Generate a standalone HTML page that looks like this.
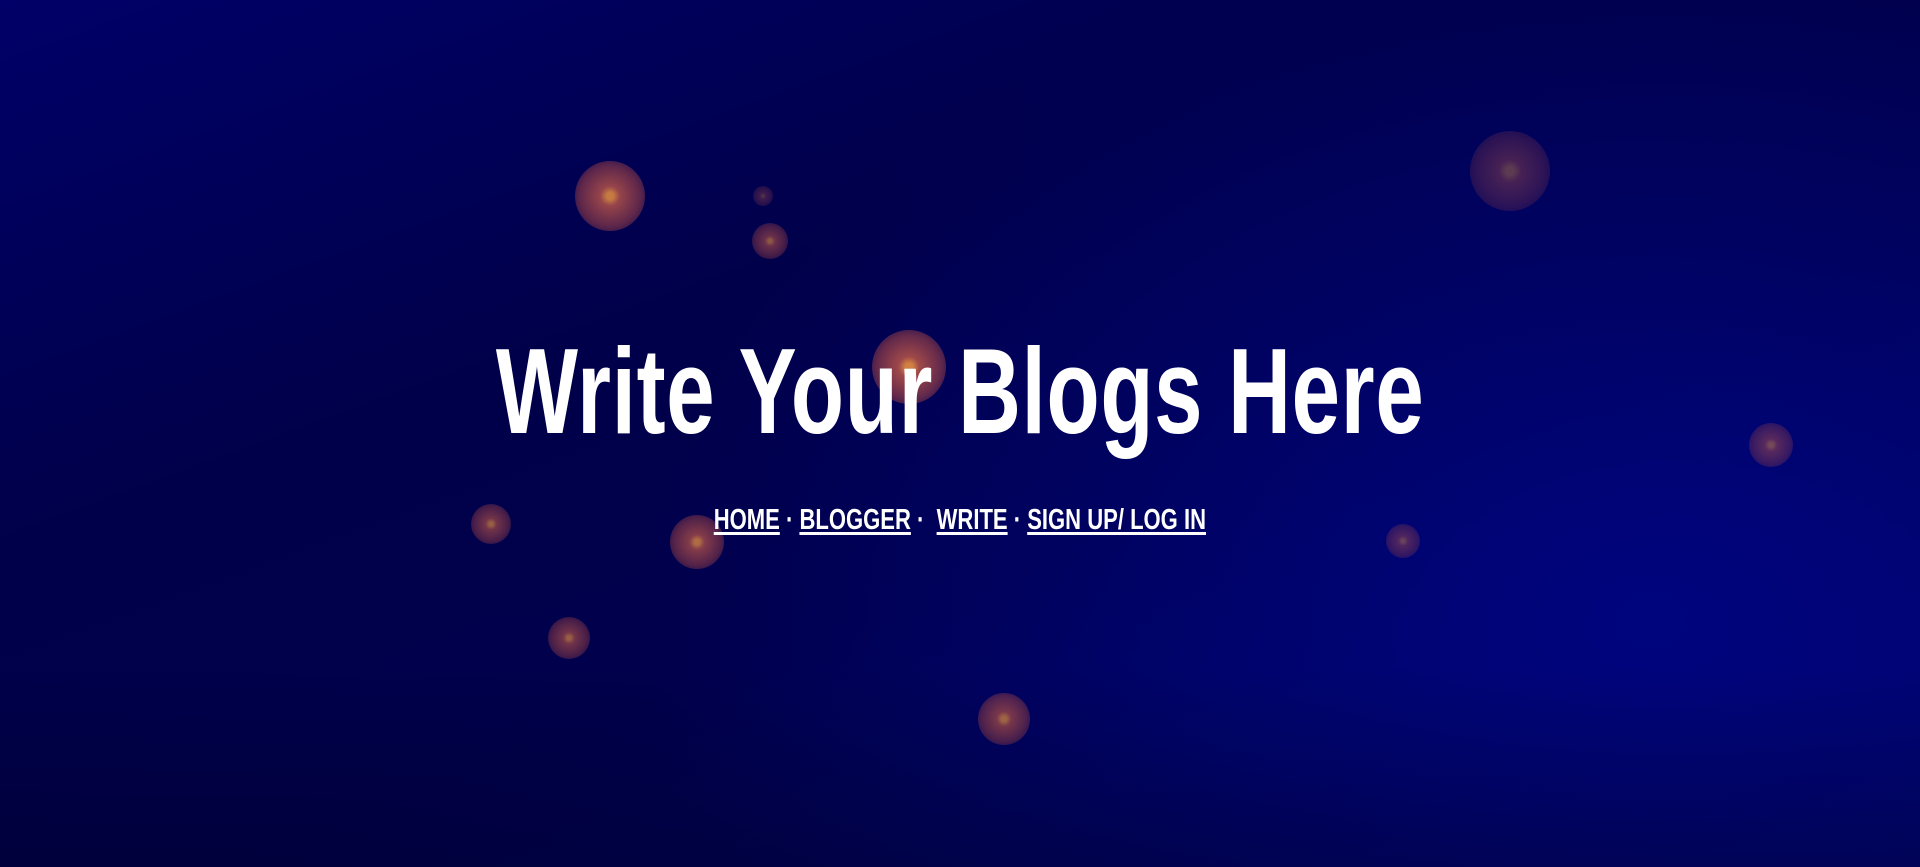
<!DOCTYPE html>
<html><head><meta charset="utf-8"><style>
html,body{margin:0;width:1920px;height:867px;overflow:hidden}
body{background:radial-gradient(ellipse 1000px 700px at 1650px 620px,rgba(0,5,130,.9) 0%,rgba(0,0,120,0) 100%),linear-gradient(160deg,#000068 0%,#00004a 35%,#00004c 60%,#000468 100%);position:relative;font-family:"Liberation Sans",sans-serif}
body:after{content:"";position:absolute;left:0;right:0;bottom:0;height:200px;background:linear-gradient(rgba(0,0,30,0),rgba(0,0,30,.35))}
.o{position:absolute;border-radius:50%;transform:translate(-50%,-50%);background:radial-gradient(circle,#e89040 0 7%,#b05048 20%,rgba(160,66,70,.7) 60%,rgba(110,45,80,0) 100%)}
h1{position:absolute;left:0;width:1920px;top:316px;margin:0;text-align:center;color:#fff;font-size:122px;font-weight:bold;line-height:150px;z-index:2}
h1 span{display:inline-block;transform:scaleX(.713);white-space:nowrap;letter-spacing:1px}
nav{position:absolute;left:0;width:1920px;top:502px;text-align:center;color:#fff;font-size:29px;font-weight:bold;z-index:2;line-height:36px}
nav span{display:inline-block;transform:scaleX(.76);white-space:pre}
nav u{text-decoration:underline;text-decoration-thickness:3px;text-underline-offset:3px}
</style></head><body>
<div class="o" style="left:610px;top:196px;width:70px;height:70px;opacity:.85"></div>
<div class="o" style="left:770px;top:241px;width:36px;height:36px;opacity:.6"></div>
<div class="o" style="left:763px;top:196px;width:20px;height:20px;opacity:.35"></div>
<div class="o" style="left:909px;top:367px;width:74px;height:74px;opacity:.9"></div>
<div class="o" style="left:1510px;top:171px;width:80px;height:80px;opacity:.4"></div>
<div class="o" style="left:1771px;top:445px;width:44px;height:44px;opacity:.5"></div>
<div class="o" style="left:491px;top:524px;width:40px;height:40px;opacity:.65"></div>
<div class="o" style="left:697px;top:542px;width:54px;height:54px;opacity:.75"></div>
<div class="o" style="left:1403px;top:541px;width:34px;height:34px;opacity:.45"></div>
<div class="o" style="left:569px;top:638px;width:42px;height:42px;opacity:.65"></div>
<div class="o" style="left:1004px;top:719px;width:52px;height:52px;opacity:.75"></div>
<h1><span>Write Your Blogs Here</span></h1>
<nav><span><u>HOME</u> · <u>BLOGGER</u> ·  <u>WRITE</u> · <u>SIGN UP/ LOG IN</u></span></nav>
</body></html>
